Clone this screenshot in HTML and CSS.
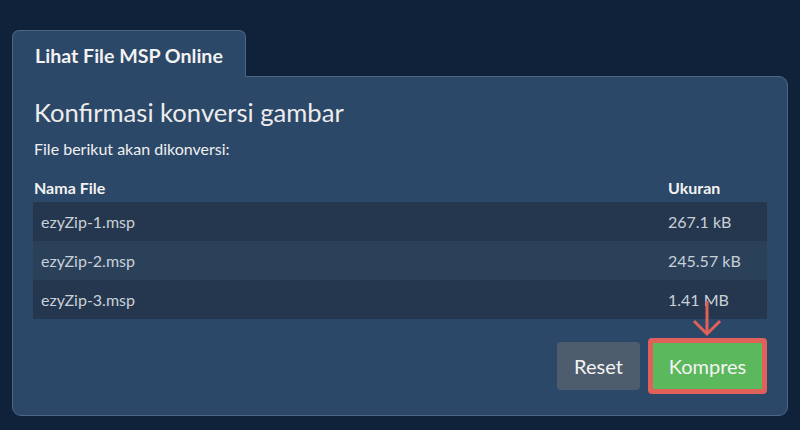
FILE: index.html
```html
<!DOCTYPE html>
<html lang="id">
<head>
<meta charset="utf-8">
<title>Lihat File MSP Online</title>
<link rel="stylesheet" href="styles.css">
</head>
<body>
<div class="wrap">
  <div class="tab">Lihat File MSP Online</div>
  <div class="panel">
    <h1 class="title">Konfirmasi konversi gambar</h1>
    <p class="sub">File berikut akan dikonversi:</p>
    <table class="files">
      <thead>
        <tr><th>Nama File</th><th class="size">Ukuran</th></tr>
      </thead>
      <tbody>
        <tr><td>ezyZip-1.msp</td><td class="size">267.1 kB</td></tr>
        <tr><td>ezyZip-2.msp</td><td class="size">245.57 kB</td></tr>
        <tr><td>ezyZip-3.msp</td><td class="size">1.41 MB</td></tr>
      </tbody>
    </table>
    <div class="actions">
      <button class="btn reset">Reset</button>
      <span class="highlight">
        <button class="btn go">Kompres</button>
        <svg class="arrow" width="32" height="36" viewBox="0 0 32 36"><path d="M16 0 V33 M3 20 L16 33 L29 20" fill="none" stroke="#e0605a" stroke-width="3"/></svg>
      </span>
    </div>
  </div>
</div>
</body>
</html>
```
FILE: styles.css
```css
html, body {
  margin: 0;
  padding: 0;
}
body {
  background: #10223a;
  font-family: Lato, "Open Sans", sans-serif;
  color: #ececec;
}
.wrap {
  padding: 30px 12px 0 12px;
}
.tab {
  box-sizing: border-box;
  width: 234px;
  height: 47px;
  background: #2c4868;
  border: 1px solid #4d6686;
  border-bottom: none;
  border-radius: 7px 7px 0 0;
  font-weight: bold;
  font-size: 19.6px;
  padding: 13px 0 0 22px;
  color: #f2f2f2;
  position: relative;
  z-index: 1;
  margin-bottom: -1px;
}
.panel {
  box-sizing: border-box;
  width: 776px;
  height: 340px;
  background: #2c4868;
  border: 1px solid #4d6686;
  border-radius: 0 9px 9px 9px;
  padding: 1px 20px 0 20px;
}
.title {
  margin: 17px 0 0 1px;
  font-size: 25.6px;
  font-weight: normal;
  line-height: 34px;
  color: #ececec;
}
.sub {
  margin: 9px 0 0 1px;
  font-size: 16px;
  line-height: 22px;
  color: #f0f0f0;
}
.files {
  margin-top: 18px;
  width: 100%;
  border-collapse: collapse;
  font-size: 16px;
}
.files th {
  text-align: left;
  font-weight: bold;
  font-size: 16px;
  padding: 0 0 0 1px;
  height: 24px;
  vertical-align: top;
  color: #f2f2f2;
}
.files td {
  height: 39px;
  padding: 0 0 0 8px;
  color: #c9d0d8;
}
.files td.size,
.files th.size {
  padding-left: 1px;
  width: 99px;
}
.files tbody tr:nth-child(odd) {
  background: #25374e;
}
.files tbody tr:nth-child(even) {
  background: #2b415a;
}
.actions {
  display: flex;
  justify-content: flex-end;
  align-items: center;
  gap: 8px;
  margin-top: 19px;
}
.btn {
  font-family: Lato, "Open Sans", sans-serif;
  font-size: 20px;
  color: #f4f4f4;
  border: none;
  cursor: pointer;
}
.reset {
  width: 83px;
  height: 48px;
  background: #4e5d6e;
  border-radius: 4px;
}
.highlight {
  position: relative;
  display: flex;
  border: 5px solid #e0605a;
  border-radius: 4px;
}
.go {
  width: 109px;
  height: 46px;
  background: #5cb85c;
  border-radius: 0;
}
.arrow {
  position: absolute;
  left: 38px;
  top: -42px;
}
```
